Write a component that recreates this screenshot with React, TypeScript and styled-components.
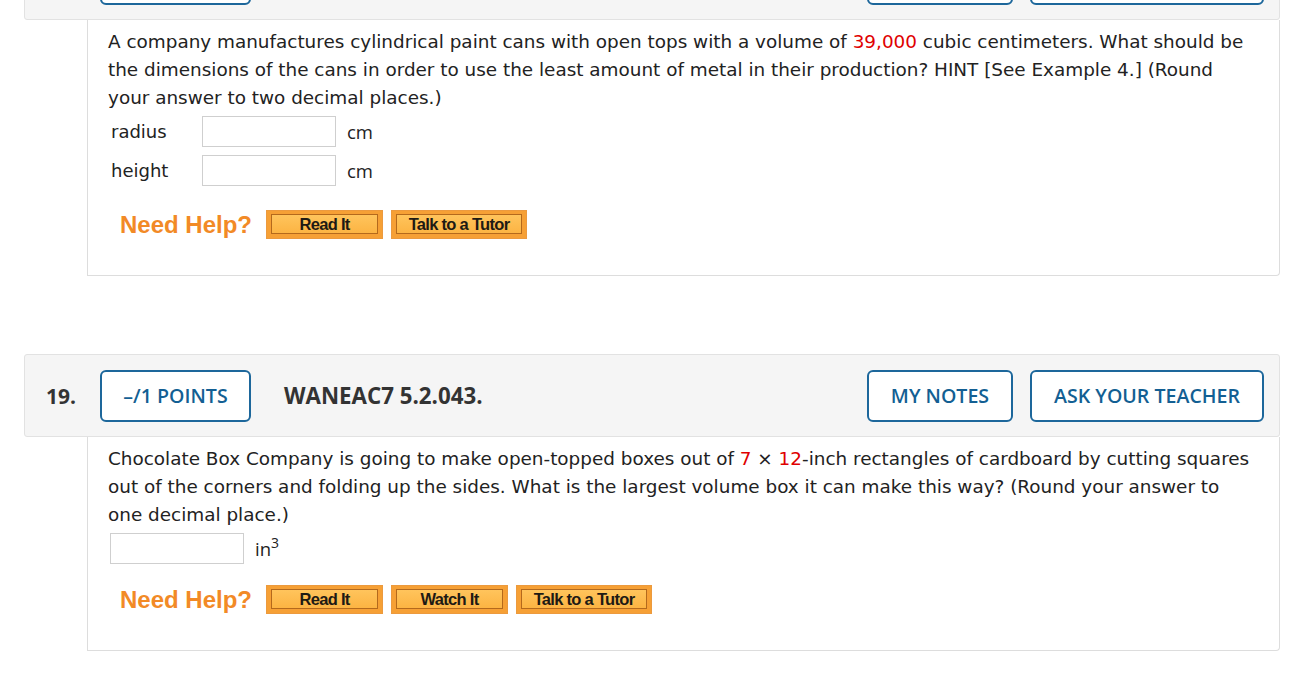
import React from "react";
import styled, { createGlobalStyle } from "styled-components";

const Global = createGlobalStyle`
  html, body { margin: 0; padding: 0; background: #ffffff; }
  body { overflow: hidden; }
`;

const Page = styled.div`
  margin-top: -63px;
  padding: 0 10px 0 24px;
  display: flex;
  flex-direction: column;
  gap: 78px;
`;

const Question = styled.section`
  display: flex;
  flex-direction: column;
`;

const Header = styled.div`
  height: 81px;
  box-sizing: content-box;
  border: 1px solid #e2e2e2;
  border-radius: 3px;
  background: #f5f5f5;
  display: flex;
  align-items: center;
  padding: 0 15px 0 21px;
  font-family: "Open Sans", sans-serif;
`;

const Num = styled.div`
  font-weight: 700;
  font-size: 21px;
  color: #333333;
  width: 54px;
`;

const OutlineButton = styled.div<{ $w: number }>`
  box-sizing: border-box;
  width: ${(p) => p.$w}px;
  height: 52px;
  border: 2px solid #1d679b;
  border-radius: 6px;
  display: flex;
  align-items: center;
  justify-content: center;
  color: #135f93;
  font-weight: 600;
  font-size: 19.6px;
  background: #ffffff;
`;

const Title = styled.div`
  margin-left: 33px;
  font-weight: 700;
  font-size: 22.3px;
  color: #333333;
  flex: 1;
`;

const RightButtons = styled.div`
  display: flex;
  gap: 17px;
`;

const Body = styled.div`
  margin-left: 63px;
  border: 1px solid #dddddd;
  border-top: none;
  border-radius: 0 0 4px 0;
  padding: 8px 24px 36px 20px;
  font-family: "DejaVu Sans", sans-serif;
  font-size: 18.4px;
  color: #222222;
`;

const Para = styled.p`
  margin: 0;
  line-height: 28px;
`;

const Red = styled.span`
  color: #e00000;
`;

const Row = styled.div<{ $indent?: number }>`
  display: flex;
  align-items: center;
  height: 39px;
  padding-left: ${(p) => p.$indent ?? 0}px;
`;

const Label = styled.span`
  width: 91px;
  padding-left: 3px;
  font-size: 18px;
`;

const Field = styled.input`
  box-sizing: border-box;
  width: 134px;
  height: 31px;
  border: 1px solid #cfcfcf;
  background: #ffffff;
  margin: 0;
  padding: 0;
  outline: none;
`;

const Unit = styled.span`
  margin-left: 11px;
  font-family: "Open Sans", sans-serif;
  font-size: 18.5px;
  color: #222;
  sup {
    font-size: 14px;
    vertical-align: 0;
    position: relative;
    top: -8px;
  }
`;

const HelpRow = styled.div<{ $top: number }>`
  margin-top: ${(p) => p.$top}px;
  display: flex;
  align-items: center;
  gap: 8px;
  padding-left: 12px;
`;

const NeedHelp = styled.span`
  font-family: "Liberation Sans", Arial, sans-serif;
  font-weight: 700;
  font-size: 24px;
  color: #f28a26;
  margin-right: 6px;
`;

const HelpButton = styled.div<{ $w: number }>`
  box-sizing: border-box;
  width: ${(p) => p.$w}px;
  height: 29px;
  background: #f6a035;
  border: 1px solid #ec9a3e;
  padding: 3px 4px 4px 4px;
  display: flex;
`;

const HelpInner = styled.div`
  flex: 1;
  border: 1px solid #b4691c;
  background: linear-gradient(#ffc45c, #fcb443);
  display: flex;
  align-items: center;
  justify-content: center;
  font-family: "Liberation Sans", Arial, sans-serif;
  font-weight: 700;
  font-size: 16.5px;
  letter-spacing: -0.7px;
  color: #1e1a14;
`;

const Help = ({ w, children }: { w: number; children: React.ReactNode }) => (
  <HelpButton $w={w}>
    <HelpInner>{children}</HelpInner>
  </HelpButton>
);

const QHeader = ({ n, title }: { n: string; title: string }) => (
  <Header>
    <Num>{n}</Num>
    <OutlineButton $w={151}>–/1 POINTS</OutlineButton>
    <Title>{title}</Title>
    <RightButtons>
      <OutlineButton $w={146}>MY NOTES</OutlineButton>
      <OutlineButton $w={234}>ASK YOUR TEACHER</OutlineButton>
    </RightButtons>
  </Header>
);

export default function App() {
  return (
    <>
      <Global />
      <Page>
        <Question>
          <QHeader n="18." title="WANEAC7 5.2.038." />
          <Body>
            <Para>
              A company manufactures cylindrical paint cans with open tops with a volume of{" "}
              <Red>39,000</Red> cubic centimeters. What should be the dimensions of the cans in
              order to use the least amount of metal in their production? HINT [See Example 4.]
              (Round your answer to two decimal places.)
            </Para>
            <Row>
              <Label>radius</Label>
              <Field />
              <Unit>cm</Unit>
            </Row>
            <Row>
              <Label>height</Label>
              <Field />
              <Unit>cm</Unit>
            </Row>
            <HelpRow $top={20}>
              <NeedHelp>Need Help?</NeedHelp>
              <Help w={117}>Read It</Help>
              <Help w={136}>Talk to a Tutor</Help>
            </HelpRow>
          </Body>
        </Question>
        <Question>
          <QHeader n="19." title="WANEAC7 5.2.043." />
          <Body>
            <Para>
              Chocolate Box Company is going to make open-topped boxes out of <Red>7</Red> ×{" "}
              <Red>12</Red>-inch rectangles of cardboard by cutting squares out of the corners and
              folding up the sides. What is the largest volume box it can make this way? (Round
              your answer to one decimal place.)
            </Para>
            <Row $indent={2}>
              <Field />
              <Unit>
                in<sup>3</sup>
              </Unit>
            </Row>
            <HelpRow $top={17}>
              <NeedHelp>Need Help?</NeedHelp>
              <Help w={117}>Read It</Help>
              <Help w={117}>Watch It</Help>
              <Help w={136}>Talk to a Tutor</Help>
            </HelpRow>
          </Body>
        </Question>
      </Page>
    </>
  );
}
